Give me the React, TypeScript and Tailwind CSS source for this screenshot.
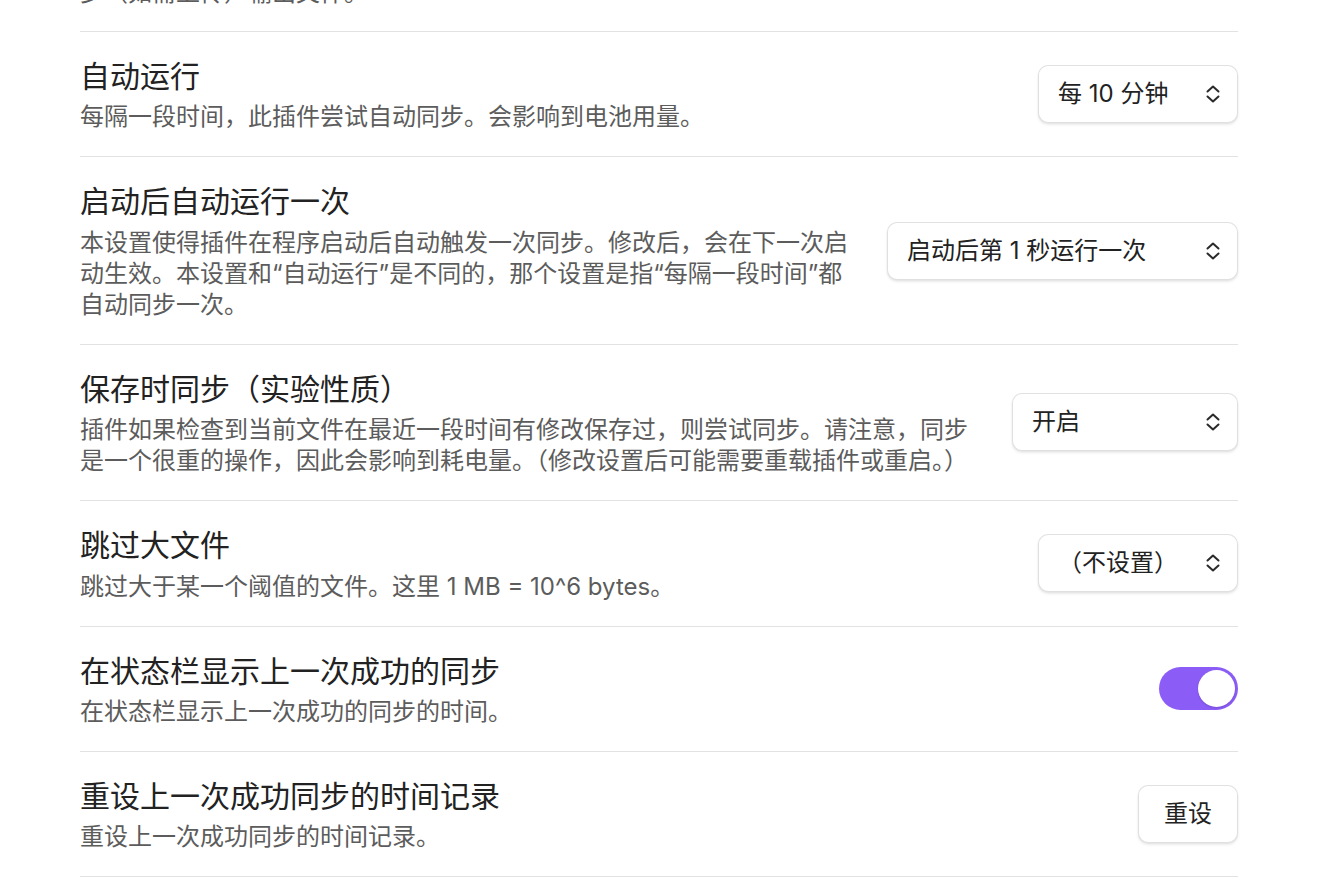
import type { ReactNode } from "react";

const FONT = { fontFamily: 'Inter, "Noto Sans CJK SC", sans-serif' };

function Chevrons() {
  return (
    <svg width="16" height="20" viewBox="0 0 16 20" fill="none" stroke="#2a2a2a" strokeWidth="2" strokeLinecap="round" strokeLinejoin="round">
      <path d="M2.5 7.5 L8 2.5 L13.5 7.5" />
      <path d="M2.5 12.5 L8 17.5 L13.5 12.5" />
    </svg>
  );
}

function Dropdown({ label, width }: { label: string; width: string }) {
  return (
    <div
      className={`${width} h-[58px] flex items-center justify-between pl-[20px] pr-[17px] rounded-[10px] bg-white text-[24px] text-[#222] shadow-[inset_0_0_0_1px_rgba(0,0,0,0.12),0_2px_3px_0_rgba(0,0,0,0.07),0_1px_2px_0_rgba(0,0,0,0.05)]`}
    >
      <span className="leading-none">{label}</span>
      <Chevrons />
    </div>
  );
}

function Toggle() {
  return (
    <div className="w-[79px] h-[43px] rounded-full bg-[#8b5cf6] flex items-center justify-end pr-[3px]">
      <div className="w-[37px] h-[37px] rounded-full bg-white shadow-[0_1px_2px_rgba(0,0,0,0.15)]" />
    </div>
  );
}

function Setting({ name, desc, control }: { name: string; desc: ReactNode; control: ReactNode }) {
  return (
    <div className="flex items-center border-t border-[#e2e2e2] py-[24px]">
      <div className="flex-1 mr-[32px]">
        <div className="text-[30px] leading-[40px] text-[#222]">{name}</div>
        <div className="mt-[5.4px] text-[24px] leading-[31px] text-[#5c5c5c]">{desc}</div>
      </div>
      <div className="shrink-0">{control}</div>
    </div>
  );
}

export default function App() {
  return (
    <div className="min-h-screen bg-white px-[80px] overflow-hidden" style={FONT}>
      <div className="h-[31px] overflow-hidden flex flex-col justify-end">
        <div className="pb-[23px] text-[24px] leading-[31px] text-[#5c5c5c]">步（如需上传）输出文件。</div>
      </div>
      <Setting
        name="自动运行"
        desc="每隔一段时间，此插件尝试自动同步。会影响到电池用量。"
        control={<Dropdown label="每 10 分钟" width="w-[200px]" />}
      />
      <Setting
        name="启动后自动运行一次"
        desc="本设置使得插件在程序启动后自动触发一次同步。修改后，会在下一次启动生效。本设置和“自动运行”是不同的，那个设置是指“每隔一段时间”都自动同步一次。"
        control={<Dropdown label="启动后第 1 秒运行一次" width="w-[351px]" />}
      />
      <Setting
        name="保存时同步（实验性质）"
        desc="插件如果检查到当前文件在最近一段时间有修改保存过，则尝试同步。请注意，同步是一个很重的操作，因此会影响到耗电量。（修改设置后可能需要重载插件或重启。）"
        control={<Dropdown label="开启" width="w-[226px]" />}
      />
      <Setting
        name="跳过大文件"
        desc="跳过大于某一个阈值的文件。这里 1 MB = 10^6 bytes。"
        control={<Dropdown label="（不设置）" width="w-[200px]" />}
      />
      <Setting
        name="在状态栏显示上一次成功的同步"
        desc="在状态栏显示上一次成功的同步的时间。"
        control={<Toggle />}
      />
      <Setting
        name="重设上一次成功同步的时间记录"
        desc="重设上一次成功同步的时间记录。"
        control={
          <button className="h-[58px] px-[26px] rounded-[10px] bg-white text-[24px] text-[#222] shadow-[inset_0_0_0_1px_rgba(0,0,0,0.12),0_2px_3px_0_rgba(0,0,0,0.07),0_1px_2px_0_rgba(0,0,0,0.05)]">
            重设
          </button>
        }
      />
      <div className="border-t border-[#e2e2e2]" />
    </div>
  );
}
